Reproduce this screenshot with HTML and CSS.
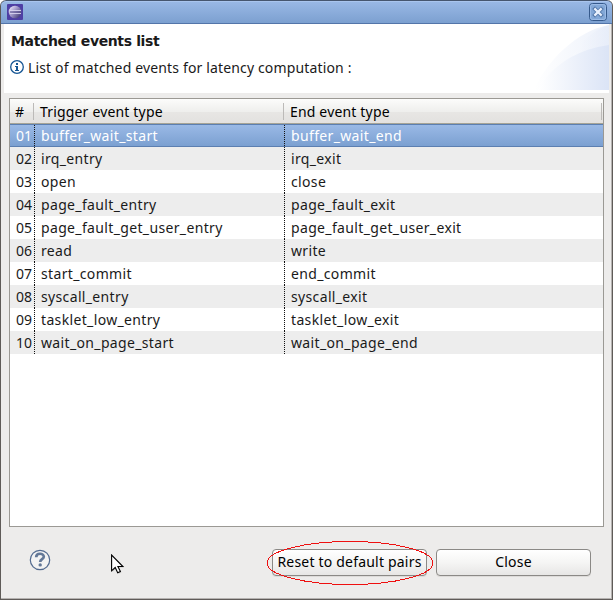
FILE: index.html
```html
<!DOCTYPE html>
<html lang="en">
<head>
<meta charset="utf-8">
<title>Matched events list</title>
<link rel="stylesheet" href="styles.css">
</head>
<body>
<div class="window">
  <div class="titlebar">
    <svg class="app-icon" width="16" height="16" viewBox="0 0 16 16">
      <defs><linearGradient id="orb" x1="0" x2="1" y1=".1" y2=".9"><stop offset="0" stop-color="#f4efff"/><stop offset=".4" stop-color="#a89fce"/><stop offset="1" stop-color="#38306e"/></linearGradient></defs>
      <rect width="16" height="16" rx="1" fill="#4e3fa4"/><circle cx="8" cy="8" r="6.3" fill="url(#orb)"/>
      <path d="M3 6.5h11M3 9.5h11" stroke="#d8d2ee" stroke-width=".9"/><path d="M3 8h11" stroke="#59518c"/>
    </svg>
    <svg class="close-icon" width="18" height="18" viewBox="0 0 18 18">
      <rect x=".5" y=".5" width="17" height="17" rx="3" fill="#83a8d7" stroke="#365a8c"/>
      <rect x="1.5" y="1.5" width="15" height="15" rx="2" fill="none" stroke="#9dbce6"/>
      <path d="M6 6l6 6m0-6l-6 6" stroke="#5478aa" stroke-width="4" stroke-linecap="square"/>
      <path d="M6.2 6.2l5.6 5.6m0-5.6l-5.6 5.6" stroke="#e9f1fd" stroke-width="2.3" stroke-linecap="square"/>
    </svg>
  </div>
  <div class="header">
    <svg class="banner" width="75" height="66" viewBox="0 0 75 66">
      <defs>
        <linearGradient id="b1" x1="0" x2="1"><stop offset="0" stop-color="#fff"/><stop offset="1" stop-color="#e3eaf8"/></linearGradient>
        <linearGradient id="b2" x1="0" x2="1"><stop offset="0" stop-color="#fff"/><stop offset="1" stop-color="#dbe4f6"/></linearGradient>
      </defs>
      <path d="M0 66C12 38 42 7 75 1V66Z" fill="url(#b1)" opacity=".65"/>
      <path d="M26 66C30 38 50 8 75 1V66Z" fill="url(#b1)" opacity=".6"/>
      <path d="M4 66C18 40 45 25 75 21V66Z" fill="url(#b2)"/>
    </svg>
    <h1>Matched events list</h1>
    <div class="message">
      <svg width="14" height="14" viewBox="0 0 14 14"><circle cx="7" cy="7" r="6.3" fill="#fff" stroke="#155593" stroke-width="1.3"/><path d="M6 3h2v2H6zM5 6h3v4h1v1H5v-1h1V7H5z" fill="#155593"/></svg>
      <span>List of matched events for latency computation :</span>
    </div>
  </div>
  <div class="table">
    <div class="row head"><span>#</span><span>Trigger event type</span><span>End event type</span></div>
    <div class="row selected"><span>01</span><span>buffer_wait_start</span><span>buffer_wait_end</span></div>
    <div class="row"><span>02</span><span>irq_entry</span><span>irq_exit</span></div>
    <div class="row"><span>03</span><span>open</span><span>close</span></div>
    <div class="row"><span>04</span><span>page_fault_entry</span><span>page_fault_exit</span></div>
    <div class="row"><span>05</span><span>page_fault_get_user_entry</span><span>page_fault_get_user_exit</span></div>
    <div class="row"><span>06</span><span>read</span><span>write</span></div>
    <div class="row"><span>07</span><span>start_commit</span><span>end_commit</span></div>
    <div class="row"><span>08</span><span>syscall_entry</span><span>syscall_exit</span></div>
    <div class="row"><span>09</span><span>tasklet_low_entry</span><span>tasklet_low_exit</span></div>
    <div class="row"><span>10</span><span>wait_on_page_start</span><span>wait_on_page_end</span></div>
  </div>
  <div class="footer">
    <svg class="help" width="22" height="22" viewBox="0 0 22 22">
      <circle cx="11" cy="11" r="9.7" fill="#f3f3f3" stroke="#536b90" stroke-width="1.2"/>
      <path d="M7.2 8.2C7.2 3.7 14.8 3.7 14.8 7.8C14.8 10.3 11.2 10.1 11.2 13" fill="none" stroke="#647998" stroke-width="2.7"/><circle cx="11.2" cy="15.9" r="1.7" fill="#647998"/>
    </svg>
    <button class="reset">Reset to default pairs</button>
    <button class="close">Close</button>
  </div>
  <svg class="highlight" width="168" height="45" viewBox="0 0 168 45"><ellipse cx="84" cy="22" rx="83" ry="21.5" fill="none" stroke="#ef1010" shape-rendering="crispEdges"/></svg>
  <svg class="pointer" width="16" height="23" viewBox="0 0 16 23"><path d="M1.5 2v16l3.7-3.4 2.5 5.2 2.7-1.3-2.5-5H13z" fill="#888" opacity=".35"/><path d="M.6 1v15.8l3.6-3.3 2.5 5.2 2.7-1.3-2.5-4.9h5z" fill="#fff" stroke="#000" stroke-width="1.1"/></svg>
</div>
</body>
</html>
```

FILE: styles.css
```css
* { box-sizing: border-box; }
body { margin: 0; background: #fff; font: 14px/23px "Noto Sans", sans-serif; color: #1a1a1a; }
.window { position: relative; width: 613px; height: 600px; background: #edeceb; border: solid #5f5b58; border-width: 0 1px 1px; border-radius: 6px 6px 0 0; overflow: hidden; box-shadow: inset -1px -1px #b5b2b0; }
.titlebar { height: 24px; margin: 0 -1px; padding: 3px 6px 0 7px; display: flex; justify-content: space-between; background: linear-gradient(#9ab9e6, #7ca0d0); border: 1px solid #3a5f94; border-top-color: #46566f; border-bottom-color: #5375a9; border-radius: 6px 6px 0 0; box-shadow: inset 0 1px #a9c5ee; }
.app-icon { margin-left: -1px; }
.close-icon { margin-top: -1px; margin-right: -1px; }
.header { position: relative; height: 69px; margin: 0 3px; padding: 6px 0 0 7px; background: #fff; }
.banner { position: absolute; right: 0; top: 0; }
h1 { margin: 0; font: bold 14px/23px "DejaVu Sans", sans-serif; letter-spacing: -.37px; }
.message { display: flex; align-items: center; gap: 4px; height: 28px; margin-left: -1px; white-space: nowrap; letter-spacing: .15px; }
.table { height: 429px; width: 595px; margin: 5px 0 0 8px; border: 1px solid #9b9994; background: #fff; }
.row { display: grid; grid-template-columns: 24px 250px 1fr; height: 23px; letter-spacing: .35px; }
.row span { padding-left: 6px; white-space: nowrap; }
.row span + span { border-left: 1px dotted #111; }
.row span:first-child { letter-spacing: 0; }
.row:nth-child(odd) { background: #ededed; }
.row.head { height: 25px; line-height: 25px; letter-spacing: .17px; color: #000; background: linear-gradient(#fcfcfb, #eeeeec 55%, #e7e6e4 56%, #e3e1df); border-bottom: 1px solid #a5a396; position: relative; }
.row.head span:first-child { padding-left: 5px; }
.row.head span + span { height: 17px; margin: 4px 0 0 -1px; line-height: 17px; border-left: 1px solid #bcbab8; }
.row.head::after { content: ""; position: absolute; right: 1px; top: 4px; width: 1px; height: 17px; background: #bcbab8; }
.row.selected { color: #fff; background: linear-gradient(#9ab9e6, #7ba0d1); border: solid #5c7fb1; border-width: 1px 0; line-height: 21px; }
.footer { display: flex; padding: 22px 21px 0 28px; align-items: flex-start; }
button { width: 155px; height: 27px; padding: 0 0 2px; border: 1px solid #8b8986; border-radius: 4px; background: linear-gradient(#fff, #f5f5f4 50%, #e7e6e5); box-shadow: 0 1px #dddbd9; font: 14px/23px "Noto Sans", sans-serif; letter-spacing: .2px; color: #000; white-space: nowrap; }
.reset { margin-left: auto; margin-right: 9px; }
.highlight { position: absolute; left: 265px; top: 541px; }
.pointer { position: absolute; left: 110px; top: 554px; }
```
